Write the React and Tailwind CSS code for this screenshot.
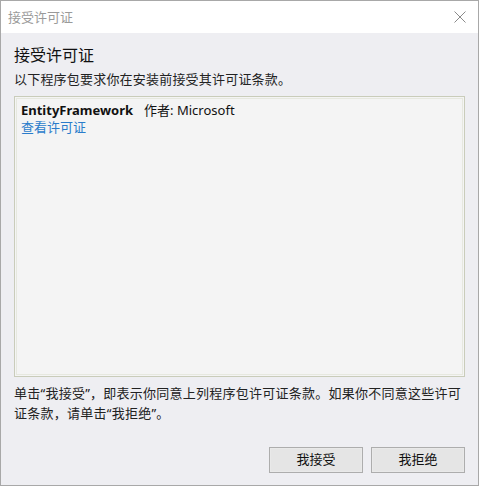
export default function App() {
  return (
    <div
      className="w-[480px] h-[487px] bg-white"
      style={{ fontFamily: '"Noto Sans", "Noto Sans CJK SC", sans-serif' }}
    >
      <div className="w-[479px] h-[486px] border border-[#a8a8a8] flex flex-col">
        {/* Title bar */}
        <div className="h-[32px] bg-white flex items-center justify-between pl-[7px] pr-[12px]">
          <span className="text-[13px] text-[#9a9a9a] leading-none">接受许可证</span>
          <svg width="12" height="12" viewBox="0 0 12 12" className="text-[#8a8a8a]">
            <path d="M0.5 0.5 L11.5 11.5 M11.5 0.5 L0.5 11.5" stroke="currentColor" strokeWidth="1" fill="none" />
          </svg>
        </div>

        {/* Body */}
        <div className="flex-1 bg-[#eeeef2] flex flex-col px-[13px]">
          <h1 className="text-[16px] text-[#111] leading-[20px] mt-[12px]">接受许可证</h1>
          <p className="text-[13px] text-[#222] leading-[18px] mt-[5px] tracking-[0.2px]">以下程序包要求你在安装前接受其许可证条款。</p>

          <div className="mt-[8px] h-[281px] border border-[#c9ccba] bg-[#f4f4f4] p-px">
            <div className="h-full border border-[#e6e8df] px-[4px] pt-[3px]">
              <div className="flex items-baseline text-[13px] leading-[17px] text-[#111]">
                <span className="font-bold">EntityFramework</span>
                <span className="ml-[11px]">作者: Microsoft</span>
              </div>
              <a className="block text-[13px] leading-[17px] text-[#2a7ccb]">查看许可证</a>
            </div>
          </div>

          <p className="text-[13px] text-[#222] leading-[20px] mt-[6px] tracking-[0.25px]">
            单击“我接受”，即表示你同意上列程序包许可证条款。如果你不同意这些许可证条款，请单击“我拒绝”。
          </p>

          <div className="mt-auto mb-[12px] flex justify-end gap-[8px]">
            <button className="w-[94px] h-[26px] border border-[#adadad] bg-[#e5e5e5] p-0">
              <span className="flex h-full items-center justify-center border border-[#e9e9e9] text-[13px] text-[#111]">我接受</span>
            </button>
            <button className="w-[94px] h-[26px] border border-[#adadad] bg-[#e5e5e5] p-0">
              <span className="flex h-full items-center justify-center border border-[#e9e9e9] text-[13px] text-[#111]">我拒绝</span>
            </button>
          </div>
        </div>
      </div>
    </div>
  );
}
